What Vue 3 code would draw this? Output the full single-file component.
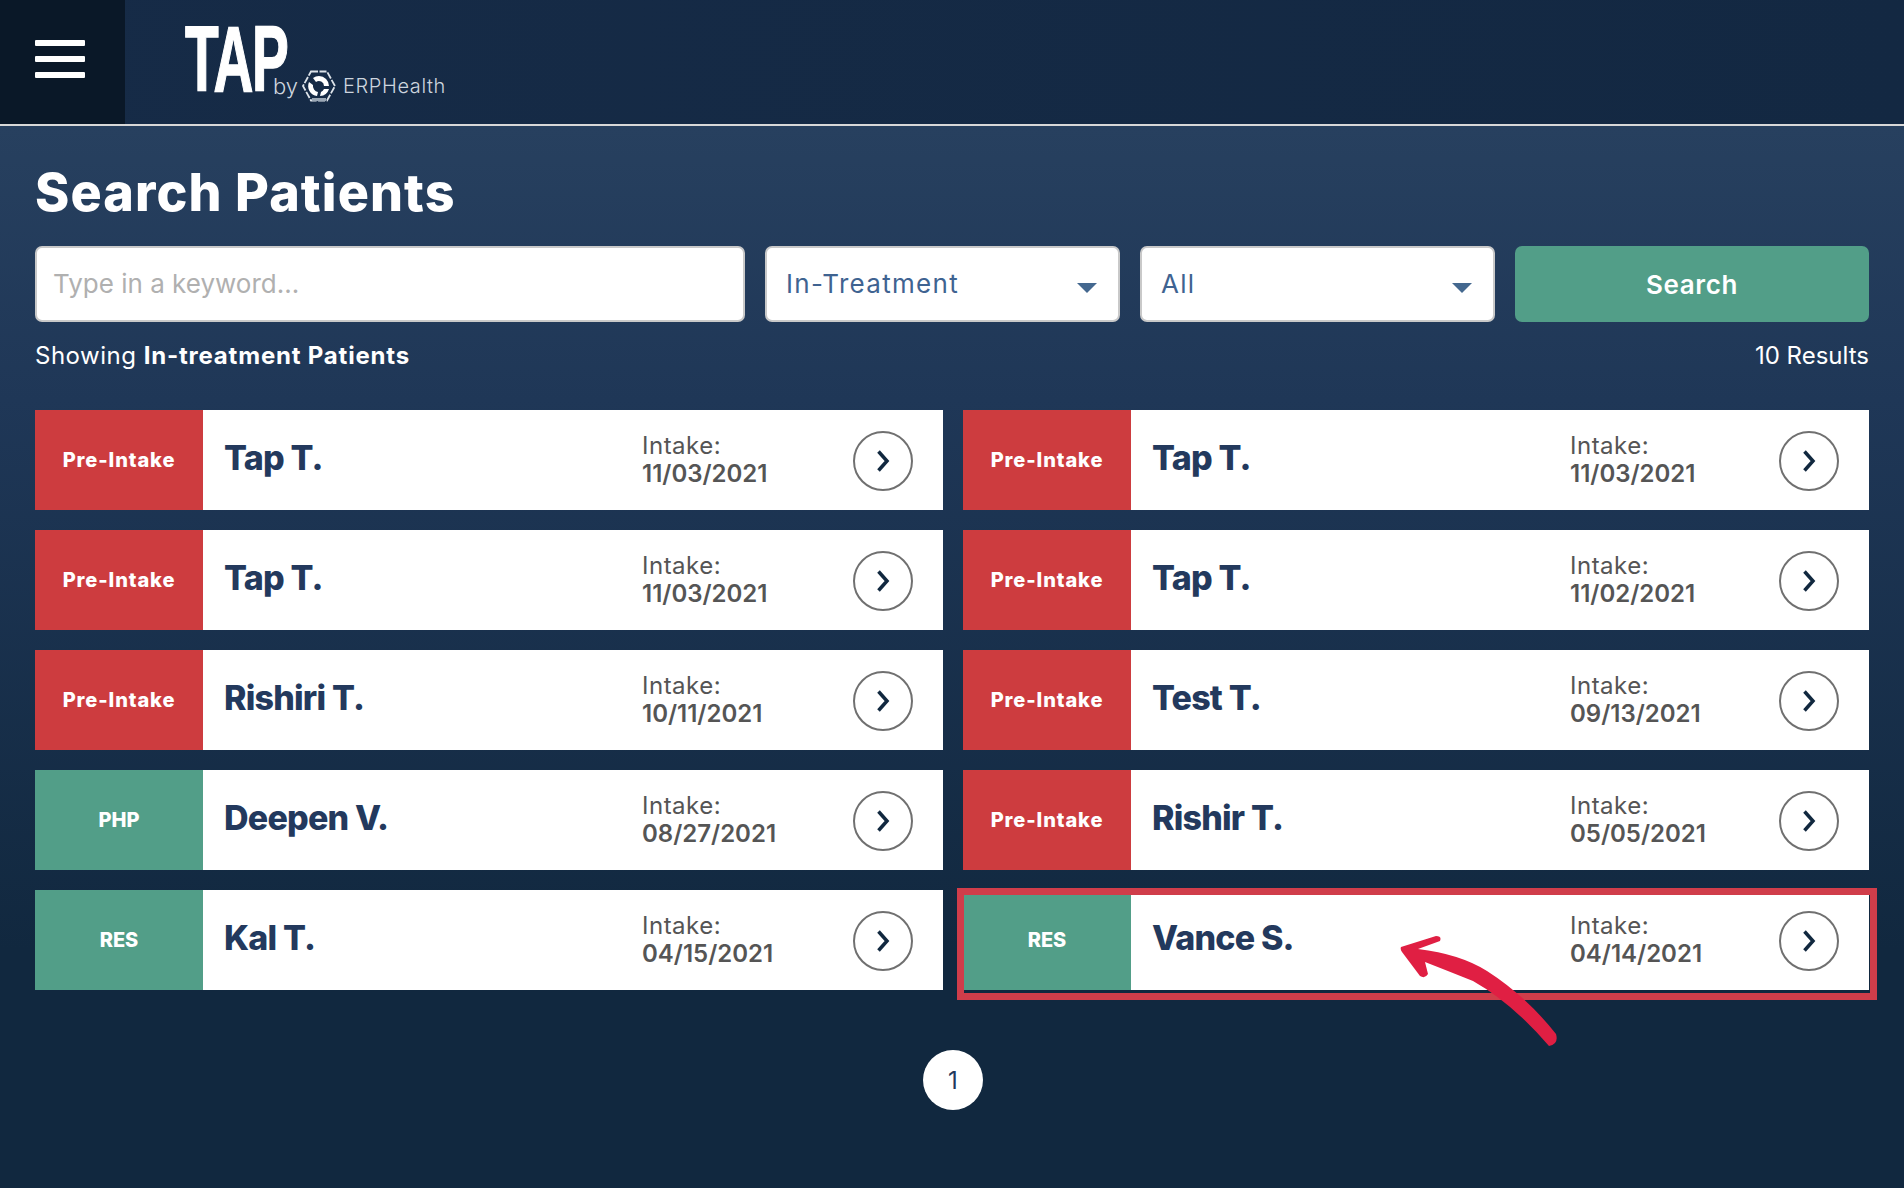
<template>
  <div class="page">
    <header class="topbar">
      <button class="menu-btn" aria-label="Menu">
        <span></span><span></span><span></span>
      </button>
      <div class="logo">
        <span class="logo-tap">TAP</span>
        <span class="logo-by">by</span>
        <svg class="logo-mark" viewBox="0 0 36 32" width="36" height="32">
          <path d="M10 1.500h16l8 14.500-8 14.500H10L2 16z" fill="none" stroke="#dde3e9" stroke-width="1.800" stroke-dasharray="7 1.500" />
          <path d="M11 29.500h14" stroke="#9aa7b5" stroke-width="3" />
          <path d="M18 6a10 10 0 0 1 10 10h-5a5 5 0 0 0-8-4l-3-4a10 10 0 0 1 6-2zM8 12l4 3a6 6 0 0 0 5 7l-1 4A10 10 0 0 1 8 12zM28 19a10 10 0 0 1-9 7l1-4a6 6 0 0 0 3-3z" fill="#fff" />
        </svg>
        <span class="logo-erp">ERPHealth</span>
      </div>
    </header>

    <main class="content">
      <h1 class="title">Search Patients</h1>

      <div class="filters">
        <input class="keyword" type="text" placeholder="Type in a keyword..." />
        <div class="select">In-Treatment<i class="caret"></i></div>
        <div class="select">All<i class="caret"></i></div>
        <button class="search-btn">Search</button>
      </div>

      <div class="summary">
        <span class="showing">Showing <b>In-treatment Patients</b></span>
        <span>10 Results</span>
      </div>

      <div class="results">
        <div v-for="p in patients" :key="p.id" class="card">
          <div class="badge" :class="p.kind === 'Pre-Intake' ? 'red' : 'green'">{{ p.kind }}</div>
          <div class="name">{{ p.name }}</div>
          <div class="intake">
            <span>Intake:</span>
            <b>{{ p.date }}</b>
          </div>
          <div class="go">
            <svg viewBox="0 0 14 22" width="14" height="22">
              <path d="M2.500 1.500l8.500 9.500-8.500 9.500" fill="none" stroke="#11283f" stroke-width="3.500" />
            </svg>
          </div>
          <template v-if="p.marked">
            <div class="frame"></div>
            <!-- viewBox is in page coordinates, traced off the reference -->
            <svg class="arrow" viewBox="1400 932 170 120" width="170" height="120">
              <path d="M1401 947L1436 936Q1442 936 1440 941L1418 949Q1460 954 1487 971Q1526 996 1556 1034Q1559 1044 1549 1046Q1512 1003 1473 981Q1448 971 1425 962L1428 974Q1425 979 1420 976L1402 952Q1400 949 1401 947Z" fill="#e01f43" />
            </svg>
          </template>
        </div>
      </div>

      <div class="pager"><span class="page-dot">1</span></div>
    </main>
  </div>
</template>

<script setup>
const patients = [
  { id: 1, kind: 'Pre-Intake', name: 'Tap T.', date: '11/03/2021' },
  { id: 2, kind: 'Pre-Intake', name: 'Tap T.', date: '11/03/2021' },
  { id: 3, kind: 'Pre-Intake', name: 'Tap T.', date: '11/03/2021' },
  { id: 4, kind: 'Pre-Intake', name: 'Tap T.', date: '11/02/2021' },
  { id: 5, kind: 'Pre-Intake', name: 'Rishiri T.', date: '10/11/2021' },
  { id: 6, kind: 'Pre-Intake', name: 'Test T.', date: '09/13/2021' },
  { id: 7, kind: 'PHP', name: 'Deepen V.', date: '08/27/2021' },
  { id: 8, kind: 'Pre-Intake', name: 'Rishir T.', date: '05/05/2021' },
  { id: 9, kind: 'RES', name: 'Kal T.', date: '04/15/2021' },
  { id: 10, kind: 'RES', name: 'Vance S.', date: '04/14/2021', marked: true }
]
</script>

<style>
html, body { margin: 0; background: #11283f; }
</style>

<style scoped>
.page {
  height: 1188px;
  overflow: hidden;
  font-family: Inter, "Liberation Sans", sans-serif;
  color: #fff;
  background: linear-gradient(180deg, #27405f 126px, #1f3757 400px, #11283f 950px);
}
.topbar {
  height: 124px;
  display: flex;
  align-items: stretch;
  background: linear-gradient(90deg, #162b47, #132842);
  border-bottom: 2px solid #d8d8d8;
}
.menu-btn {
  width: 125px;
  padding: 0 0 6px 35px;
  border: none;
  background: #0a1828;
  display: flex;
  flex-direction: column;
  align-items: flex-start;
  justify-content: center;
  gap: 10px;
}
.menu-btn span {
  width: 50px;
  height: 6px;
  border-radius: 1px;
  background: #fff;
}
.logo {
  position: relative;
  margin-left: 60px;
  display: flex;
  align-items: flex-end;
  padding-bottom: 21px;
}
.logo-tap {
  width: 88px;
  font: 700 92px/72px "Liberation Sans", sans-serif;
  transform: scaleX(0.6);
  transform-origin: left bottom;
  letter-spacing: -2px;
  margin-bottom: 8px;
  -webkit-text-stroke: 1.5px #fff;
}
.logo-by {
  font-size: 22px;
  font-weight: 300;
  line-height: 28px;
  color: #cdd5de;
  margin-right: 3px;
  margin-bottom: 3px;
}
.logo-mark { margin-bottom: 1px; margin-right: 6px; }
.logo-erp {
  font-size: 20px;
  font-weight: 300;
  letter-spacing: 0.6px;
  line-height: 26px;
  color: #cdd5de;
  margin-bottom: 4px;
}
.content {
  padding: 0 35px;
}
.title {
  margin: 0;
  padding-top: 37px;
  font-size: 52px;
  line-height: 60px;
  font-weight: 800;
  letter-spacing: 1.1px;
}
.filters {
  margin-top: 23px;
  display: grid;
  grid-template-columns: 710px 355px 355px 1fr;
  gap: 20px;
  height: 76px;
}
.keyword,
.select {
  box-sizing: border-box;
  height: 76px;
  border: 2px solid #c9c9c9;
  border-radius: 7px;
  background: #fff;
  font-family: inherit;
  font-size: 26px;
}
.keyword {
  padding: 0 16px 2px;
  width: 100%;
  outline: none;
}
.keyword::placeholder { color: #b0b0b0; opacity: 1; }
.select {
  position: relative;
  display: flex;
  align-items: center;
  padding: 0 0 2px 19px;
  letter-spacing: 1.3px;
  color: #3f6391;
}
.caret {
  position: absolute;
  right: 21px;
  top: 35px;
  border-left: 10px solid transparent;
  border-right: 10px solid transparent;
  border-top: 10px solid #44688f;
}
.search-btn {
  border: none;
  border-radius: 7px;
  background: #529e88;
  color: #fff;
  font-family: inherit;
  font-size: 26px;
  font-weight: 600;
  letter-spacing: 0.6px;
}
.summary {
  margin-top: 18px;
  display: flex;
  justify-content: space-between;
  font-size: 24px;
  line-height: 32px;
}
.showing { letter-spacing: 0.5px; }
.summary b { font-weight: 700; letter-spacing: 0.8px; }
.results {
  margin-top: 38px;
  display: grid;
  grid-template-columns: 908px 1fr;
  column-gap: 20px;
  row-gap: 20px;
}
.card {
  position: relative;
  height: 100px;
  background: #fff;
  display: flex;
  align-items: center;
}
.badge {
  width: 168px;
  height: 100%;
  flex: none;
  display: flex;
  align-items: center;
  justify-content: center;
  font-size: 20px;
  font-weight: 800;
}
.red { background: #cd3c3f; letter-spacing: 0.9px; }
.green { background: #529e88; }
.name {
  width: 418px;
  flex: none;
  padding-left: 21px;
  box-sizing: border-box;
  margin-top: -6px;
  font-size: 34px;
  font-weight: 800;
  letter-spacing: -0.8px;
  color: #23395d;
}
.intake {
  flex: 1;
  display: flex;
  flex-direction: column;
  font-size: 24px;
  line-height: 28px;
  color: #555;
  margin-left: 21px;
}
.intake span { letter-spacing: 0.5px; }
.intake b { font-weight: 600; }
.go {
  box-sizing: border-box;
  width: 60px;
  height: 60px;
  margin: 2px 30px 0 0;
  border: 2px solid #707070;
  border-radius: 50%;
  display: flex;
  align-items: center;
  justify-content: center;
}
.frame {
  position: absolute;
  left: -6px;
  right: -8px;
  top: -2px;
  bottom: -10px;
  border: 7px solid #d03d4a;
  pointer-events: none;
}
.arrow {
  position: absolute;
  left: 437px;
  top: 42px;
}
.pager {
  margin-top: 60px;
  padding-left: 2px;
  display: flex;
  justify-content: center;
}
.page-dot {
  width: 60px;
  height: 60px;
  border-radius: 50%;
  background: #fff;
  color: #23395d;
  display: flex;
  align-items: center;
  justify-content: center;
  font-size: 24px;
}
</style>
